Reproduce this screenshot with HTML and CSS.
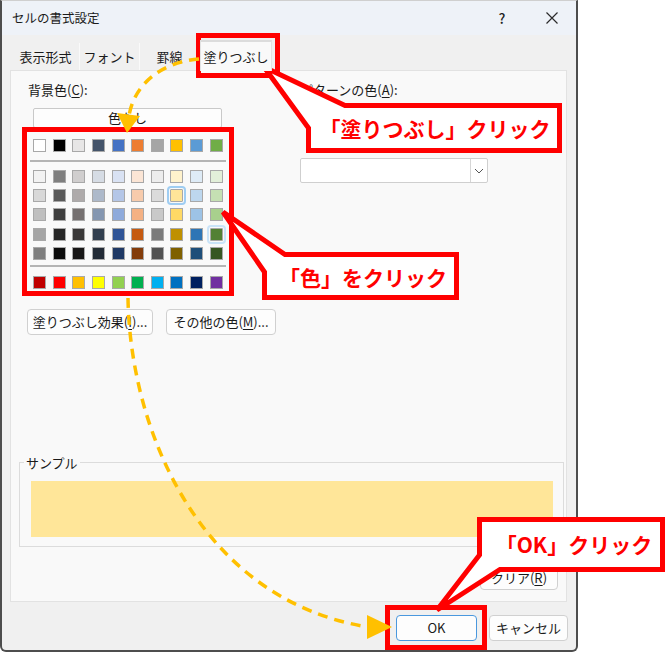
FILE: index.html
```html
<!DOCTYPE html>
<html lang="ja">
<head>
<meta charset="utf-8">
<title>セルの書式設定</title>
<link rel="stylesheet" href="styles.css">
</head>
<body>
<div class="dialog">
  <div class="titlebar">
    <span class="title">セルの書式設定</span>
    <span class="help">?</span>
    <span class="close"><svg width="14" height="14" viewBox="0 0 14 14"><path d="M1.5 1.5 L12.5 12.5 M12.5 1.5 L1.5 12.5" stroke="#2b2b2b" stroke-width="1.2" fill="none"/></svg></span>
  </div>
  <div class="body">
    <div class="tabs">
      <div class="tab t1">表示形式</div>
      <div class="tab t2">フォント</div>
      <div class="tab t3">罫線</div>
      <div class="tab t4 active">塗りつぶし</div>
    </div>
    <div class="panel">
      <div class="cols">
        <div class="left">
          <div class="label lbl-bg">背景色(<u>C</u>):</div>
          <div class="nocolor">色なし</div>
          <div class="palette">
            <div class="swrow">
              <span class="sw" style="background:#FFFFFF"></span><span class="sw" style="background:#000000"></span><span class="sw" style="background:#E7E6E6"></span><span class="sw" style="background:#44546A"></span><span class="sw" style="background:#4472C4"></span><span class="sw" style="background:#ED7D31"></span><span class="sw" style="background:#A5A5A5"></span><span class="sw" style="background:#FFC000"></span><span class="sw" style="background:#5B9BD5"></span><span class="sw" style="background:#70AD47"></span>
            </div>
            <div class="sep"></div>
            <div class="swrow tints">
              <span class="sw" style="background:#F2F2F2"></span><span class="sw" style="background:#7F7F7F"></span><span class="sw" style="background:#D0CECE"></span><span class="sw" style="background:#D6DCE4"></span><span class="sw" style="background:#D9E2F3"></span><span class="sw" style="background:#FBE5D5"></span><span class="sw" style="background:#EDEDED"></span><span class="sw" style="background:#FFF2CC"></span><span class="sw" style="background:#DEEBF6"></span><span class="sw" style="background:#E2EFD9"></span>
              <span class="sw" style="background:#D8D8D8"></span><span class="sw" style="background:#595959"></span><span class="sw" style="background:#AEAAAA"></span><span class="sw" style="background:#ADB9CA"></span><span class="sw" style="background:#B4C6E7"></span><span class="sw" style="background:#F7CBAC"></span><span class="sw" style="background:#DBDBDB"></span><span class="sw selected" style="background:#FEE599"></span><span class="sw" style="background:#BDD7EE"></span><span class="sw" style="background:#C5E0B3"></span>
              <span class="sw" style="background:#BFBFBF"></span><span class="sw" style="background:#3F3F3F"></span><span class="sw" style="background:#757070"></span><span class="sw" style="background:#8496B0"></span><span class="sw" style="background:#8EAADB"></span><span class="sw" style="background:#F4B183"></span><span class="sw" style="background:#C9C9C9"></span><span class="sw" style="background:#FFD965"></span><span class="sw" style="background:#9DC3E6"></span><span class="sw" style="background:#A8D08D"></span>
              <span class="sw" style="background:#A5A5A5"></span><span class="sw" style="background:#262626"></span><span class="sw" style="background:#3A3838"></span><span class="sw" style="background:#323F4F"></span><span class="sw" style="background:#2F5496"></span><span class="sw" style="background:#C55A11"></span><span class="sw" style="background:#7B7B7B"></span><span class="sw" style="background:#BF9000"></span><span class="sw" style="background:#2E75B5"></span><span class="sw hover" style="background:#538135"></span>
              <span class="sw" style="background:#7F7F7F"></span><span class="sw" style="background:#0C0C0C"></span><span class="sw" style="background:#171616"></span><span class="sw" style="background:#222A35"></span><span class="sw" style="background:#1F3864"></span><span class="sw" style="background:#833C0B"></span><span class="sw" style="background:#525252"></span><span class="sw" style="background:#7F6000"></span><span class="sw" style="background:#1E4E79"></span><span class="sw" style="background:#375623"></span>
            </div>
            <div class="sep sep2"></div>
            <div class="swrow std">
              <span class="sw" style="background:#C00000"></span><span class="sw" style="background:#FF0000"></span><span class="sw" style="background:#FFC000"></span><span class="sw" style="background:#FFFF00"></span><span class="sw" style="background:#92D050"></span><span class="sw" style="background:#00B050"></span><span class="sw" style="background:#00B0F0"></span><span class="sw" style="background:#0070C0"></span><span class="sw" style="background:#002060"></span><span class="sw" style="background:#7030A0"></span>
            </div>
          </div>
          <div class="btnrow">
            <button class="btn b-effect">塗りつぶし効果(<u>I</u>)...</button>
            <button class="btn b-more">その他の色(<u>M</u>)...</button>
          </div>
        </div>
        <div class="right">
          <div class="label">パターンの色(<u>A</u>):</div>
          <div class="select s2"><span class="arrow"><svg width="10" height="6" viewBox="0 0 10 6"><path d="M1 1 L5 5 L9 1" stroke="#555" stroke-width="1" fill="none"/></svg></span></div>
        </div>
      </div>
      <fieldset class="sample">
        <legend>サンプル</legend>
        <div class="fill"></div>
      </fieldset>
      <div class="clear-row"><button class="btn b-clear">クリア(<u>R</u>)</button></div>
    </div>
    <div class="footer">
      <button class="btn b-ok">OK</button>
      <button class="btn b-cancel">キャンセル</button>
    </div>
  </div>
</div>

<svg class="overlay" width="672" height="655" viewBox="0 0 672 655">
  <g fill="none" stroke="#ff0000" stroke-width="5">
    <rect x="198.5" y="35.5" width="79" height="40"/>
    <rect x="24.5" y="129.5" width="207" height="164"/>
    <rect x="387.5" y="607.5" width="97" height="40"/>
  </g>
  <g fill="#ffffff" stroke="#ff0000" stroke-width="5" stroke-linejoin="miter" stroke-miterlimit="4">
    <polygon points="264,67 345,105.5 559.5,105.5 559.5,150.5 308.5,150.5 308.5,128"/>
    <polygon points="223,212 285,254.5 456.5,254.5 456.5,297.5 264.5,297.5 264.5,272"/>
    <polygon points="437,610 479.5,555 479.5,519.5 662.5,519.5 662.5,569.5 500,569.5"/>
  </g>
  <g class="callout-text" fill="#ff0000" text-anchor="middle" dominant-baseline="central">
    <text x="435" y="128">「塗りつぶし」クリック</text>
    <text x="363" y="277">「色」をクリック</text>
    <text x="574" y="544">「OK」クリック</text>
  </g>
  <g fill="none" stroke="#ffc000" stroke-width="3.5" stroke-dasharray="10 7">
    <path d="M199,59 C162,62 134,84 129,116"/>
    <path d="M128,298 C130,430 200,600 368,627"/>
  </g>
  <polygon fill="#ffc000" points="117,113 140,116 127,133"/>
  <polygon fill="#ffc000" points="367,615 392,627 367,639"/>
</svg>
</body>
</html>
```

FILE: styles.css
```css
* { box-sizing: border-box; }
html, body { margin: 0; padding: 0; }
body {
  width: 672px;
  height: 655px;
  background: #ffffff;
  position: relative;
  overflow: hidden;
  font-family: "Noto Sans CJK JP", "Noto Sans", sans-serif;
  font-size: 13px;
  color: #1a1a1a;
}
u { text-decoration: underline; text-underline-offset: 2px; }

.dialog {
  width: 578px;
  height: 652px;
  border: 2px solid #4d4d4d;
  border-top: 1px solid #cfcfcf;
  border-radius: 0 0 6px 6px;
  background: #f0f0f0;
  display: flex;
  flex-direction: column;
}

.titlebar {
  height: 34px;
  background: #eef2f8;
  display: flex;
  align-items: center;
  padding-left: 10px;
  flex-shrink: 0;
}
.title { flex: 1; font-size: 12.5px; line-height: 16px; color: #1b1b1b; }
.help {
  width: 20px;
  text-align: center;
  font-size: 14px;
  font-weight: 500;
  margin-right: 20px;
  color: #222;
}
.close {
  width: 40px;
  height: 20px;
  margin-right: 4px;
  display: flex;
  align-items: center;
  justify-content: center;
}

.body {
  flex: 1;
  padding: 0 9px 0 8px;
  display: flex;
  flex-direction: column;
}

.tabs {
  height: 35px;
  padding-left: 2px;
  display: flex;
  align-items: flex-end;
  flex-shrink: 0;
}
.tab {
  height: 27px;
  line-height: 28px;
  text-align: center;
  border-right: 1px solid #fafafa;
  background: #f0f0f0;
  color: #1a1a1a;
}
.t1 { width: 68px; }
.t2 { width: 60px; }
.t3 { width: 60px; }
.t4 { width: 72px; }
.tab.active {
  height: 31px;
  line-height: 30px;
  margin-bottom: -1px;
  position: relative;
  z-index: 1;
  background: #f9f9f9;
  border: 1px solid #e2e2e2;
  border-top: 2px solid #dcdcdc;
  border-bottom: none;
}

.panel {
  height: 532px;
  flex-shrink: 0;
  background: #f9f9f9;
  border: 1px solid #e2e2e2;
  padding-top: 10px;
}

.cols { display: flex; padding-left: 16px; }
.left { width: 250px; }
.right { width: 188px; margin-left: 23px; }
.label { line-height: 18px; height: 18px; white-space: nowrap; }
.lbl-bg { padding-left: 1px; }

.nocolor {
  margin: 9px 0 0 6px;
  width: 189px;
  height: 20px;
  line-height: 18px;
  text-align: center;
  background: #fdfdfd;
  border: 1px solid #c9c9c9;
  border-radius: 2px;
}

.palette { margin-left: 6px; padding-top: 11px; width: 190px; }
.swrow {
  display: grid;
  grid-template-columns: repeat(10, 13px);
  column-gap: 6.63px;
}
.tints { margin-top: 8px; row-gap: 6.2px; }
.std { margin-top: 9px; }
.sw {
  display: block;
  width: 13px;
  height: 13px;
  border: 1px solid #a8a8a8;
}
.sw.selected { outline: 2px solid #9fcdf2; outline-offset: 1px; border-radius: 1px; }
.sw.hover { outline: 2px solid #c9e3f8; outline-offset: 1px; border-radius: 1px; }
.sep {
  height: 2px;
  width: 196px;
  margin: 8px 0 0 -3px;
  background: #b4b4b4;
}
.sep2 { margin-top: 5px; }

.btnrow { display: flex; gap: 13px; margin-top: 20px; }
.btn {
  font-family: inherit;
  font-size: 13px;
  color: #1a1a1a;
  background: #fdfdfd;
  border: 1px solid #d0d0d0;
  border-radius: 4px;
  height: 26px;
  padding: 0;
  line-height: 22px;
  white-space: nowrap;
}
.b-effect { width: 126px; }
.b-more { width: 110px; }

.select {
  position: relative;
  background: #ffffff;
  border: 1px solid #cfcfcf;
  border-radius: 2px;
}
.s2 { margin-top: 59px; height: 25px; }
.arrow {
  position: absolute;
  right: 0;
  top: 0;
  bottom: 0;
  width: 17px;
  border-left: 1px solid #d6d6d6;
  display: flex;
  align-items: center;
  justify-content: center;
}

.sample {
  margin: 120px 0 0 8px;
  width: 545px;
  padding: 10px 10px 9px 11px;
  border: 1px solid #dcdcdc;
}
.sample legend {
  padding: 0 2px;
  margin-left: -7px;
  line-height: 16px;
  font-size: 13px;
}
.fill { height: 56px; background: #ffe699; }

.clear-row {
  display: flex;
  justify-content: flex-end;
  padding-right: 8px;
  margin-top: 19px;
}
.b-clear { width: 78px; height: 24px; }

.footer {
  display: flex;
  justify-content: flex-end;
  gap: 12px;
  padding: 13px 0 0 0;
  margin-right: -1px;
}
.b-ok { width: 81px; border-color: #4a98de; }
.b-cancel { width: 79px; }

.overlay {
  position: absolute;
  left: 0;
  top: 0;
  pointer-events: none;
}
.callout-text {
  font-family: "Noto Sans CJK JP", "Noto Sans", sans-serif;
  font-size: 21px;
  font-weight: 700;
}
```
